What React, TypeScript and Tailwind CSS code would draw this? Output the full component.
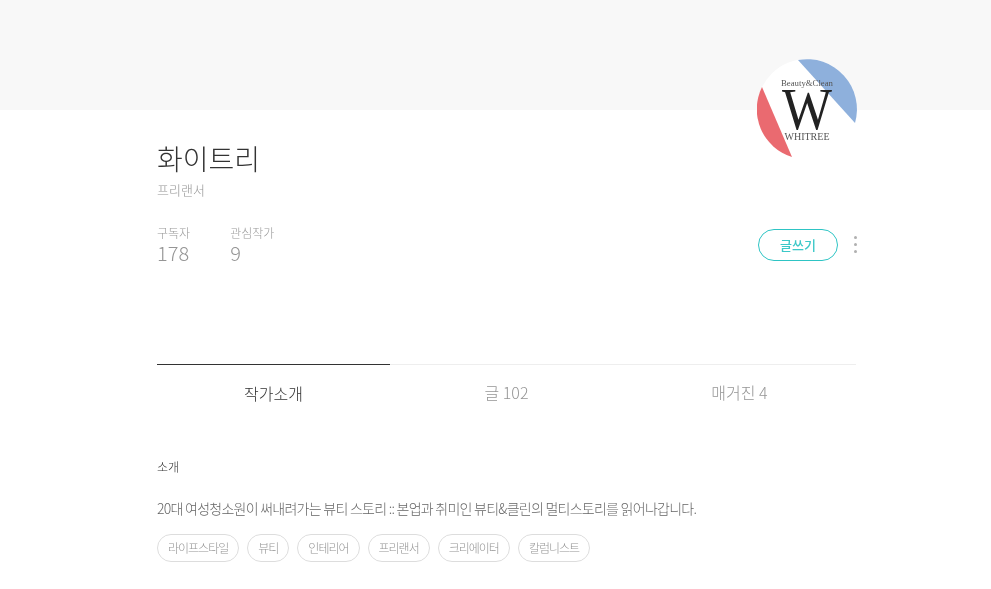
const FONT = "font-['Noto_Sans_CJK_KR','Noto_Sans',sans-serif]";

function Logo() {
  return (
    <svg className="absolute left-[757px] top-[59px]" width="100" height="100" viewBox="0 0 100 100">
      <circle cx="50" cy="50" r="50" fill="#fff" />
      <path d="M41 1 A50 50 0 0 1 98 64 Z" fill="#8eb0dc" />
      <path d="M5 28 A50 50 0 0 0 35 98 Z" fill="#ea6a70" />
      <text x="50" y="27" textAnchor="middle" textLength="52" lengthAdjust="spacingAndGlyphs" fontFamily="Liberation Serif" fontSize="9" fill="#555">Beauty&amp;Clean</text>
      <text x="50" y="70" textAnchor="middle" textLength="50" lengthAdjust="spacingAndGlyphs" fontFamily="Liberation Serif" fontSize="60" fill="#222">W</text>
      <text x="50" y="81" textAnchor="middle" textLength="45" lengthAdjust="spacingAndGlyphs" fontFamily="Liberation Serif" fontSize="10" fill="#555">WHITREE</text>
    </svg>
  );
}

function Stat({ label, value }: { label: string; value: string }) {
  return (
    <div className="flex flex-col">
      <span className="text-[12px] leading-[16px] font-light text-[#999]">{label}</span>
      <span className="text-[20px] leading-[24px] font-light text-[#959595]">{value}</span>
    </div>
  );
}

const tags = ["라이프스타일", "뷰티", "인테리어", "프리랜서", "크리에이터", "칼럼니스트"];

export default function App() {
  return (
    <div className={`relative min-h-[589px] overflow-hidden will-change-transform ${FONT}`}>
      <div className="h-[110px] bg-[#f8f8f8]" />
      <Logo />
      <div className="ml-[157px] w-[699px]">
        <h1 className="mt-[29px] text-[28px] leading-[38px] font-light text-[#333]">화이트리</h1>
        <p className="mt-[3px] text-[13px] leading-[20px] font-light text-[#959595]">프리랜서</p>

        <div className="mt-[25px] flex items-center justify-between">
          <div className="flex gap-[40px]">
            <Stat label="구독자" value="178" />
            <Stat label="관심작가" value="9" />
          </div>
          <div className="-mr-px flex items-center gap-[16px]">
            <button className="h-[32px] w-[80px] rounded-full border border-[#2ec4c4] text-[13px] font-medium text-[#3cc8c8]">글쓰기</button>
            <div className="-mt-px flex flex-col gap-[4px]">
              <span className="h-[3px] w-[3px] rounded-full bg-[#b0b0b0]" />
              <span className="h-[3px] w-[3px] rounded-full bg-[#b0b0b0]" />
              <span className="h-[3px] w-[3px] rounded-full bg-[#b0b0b0]" />
            </div>
          </div>
        </div>

        <div className="mt-[99px] grid grid-cols-3 border-t border-[#eee]">
          <div className="-mt-px border-t border-[#333] pt-[14px] text-center text-[16px] leading-[28px] font-light text-[#333]">작가소개</div>
          <div className="pt-[13px] text-center text-[16px] leading-[28px] font-light text-[#959595]">글 102</div>
          <div className="pt-[13px] text-center text-[16px] leading-[28px] font-light text-[#959595]">매거진 4</div>
        </div>

        <h2 className="mt-[51px] text-[12px] leading-[18px] font-light text-[#333]">소개</h2>
        <p className="mt-[21px] text-[14px] leading-[22px] font-light tracking-[-0.74px] text-[#666]">
          20대 여성청소원이 써내려가는 뷰티 스토리 :: 본업과 취미인 뷰티&amp;클린의 멀티스토리를 읽어나갑니다.
        </p>
        <div className="mt-[15px] flex gap-[8px]">
          {tags.map((t) => (
            <span key={t} className="flex h-[28px] items-center rounded-full border border-[#ddd] px-[10px] text-[12px] font-light tracking-[-1px] text-[#959595]">
              {t}
            </span>
          ))}
        </div>
      </div>
    </div>
  );
}
